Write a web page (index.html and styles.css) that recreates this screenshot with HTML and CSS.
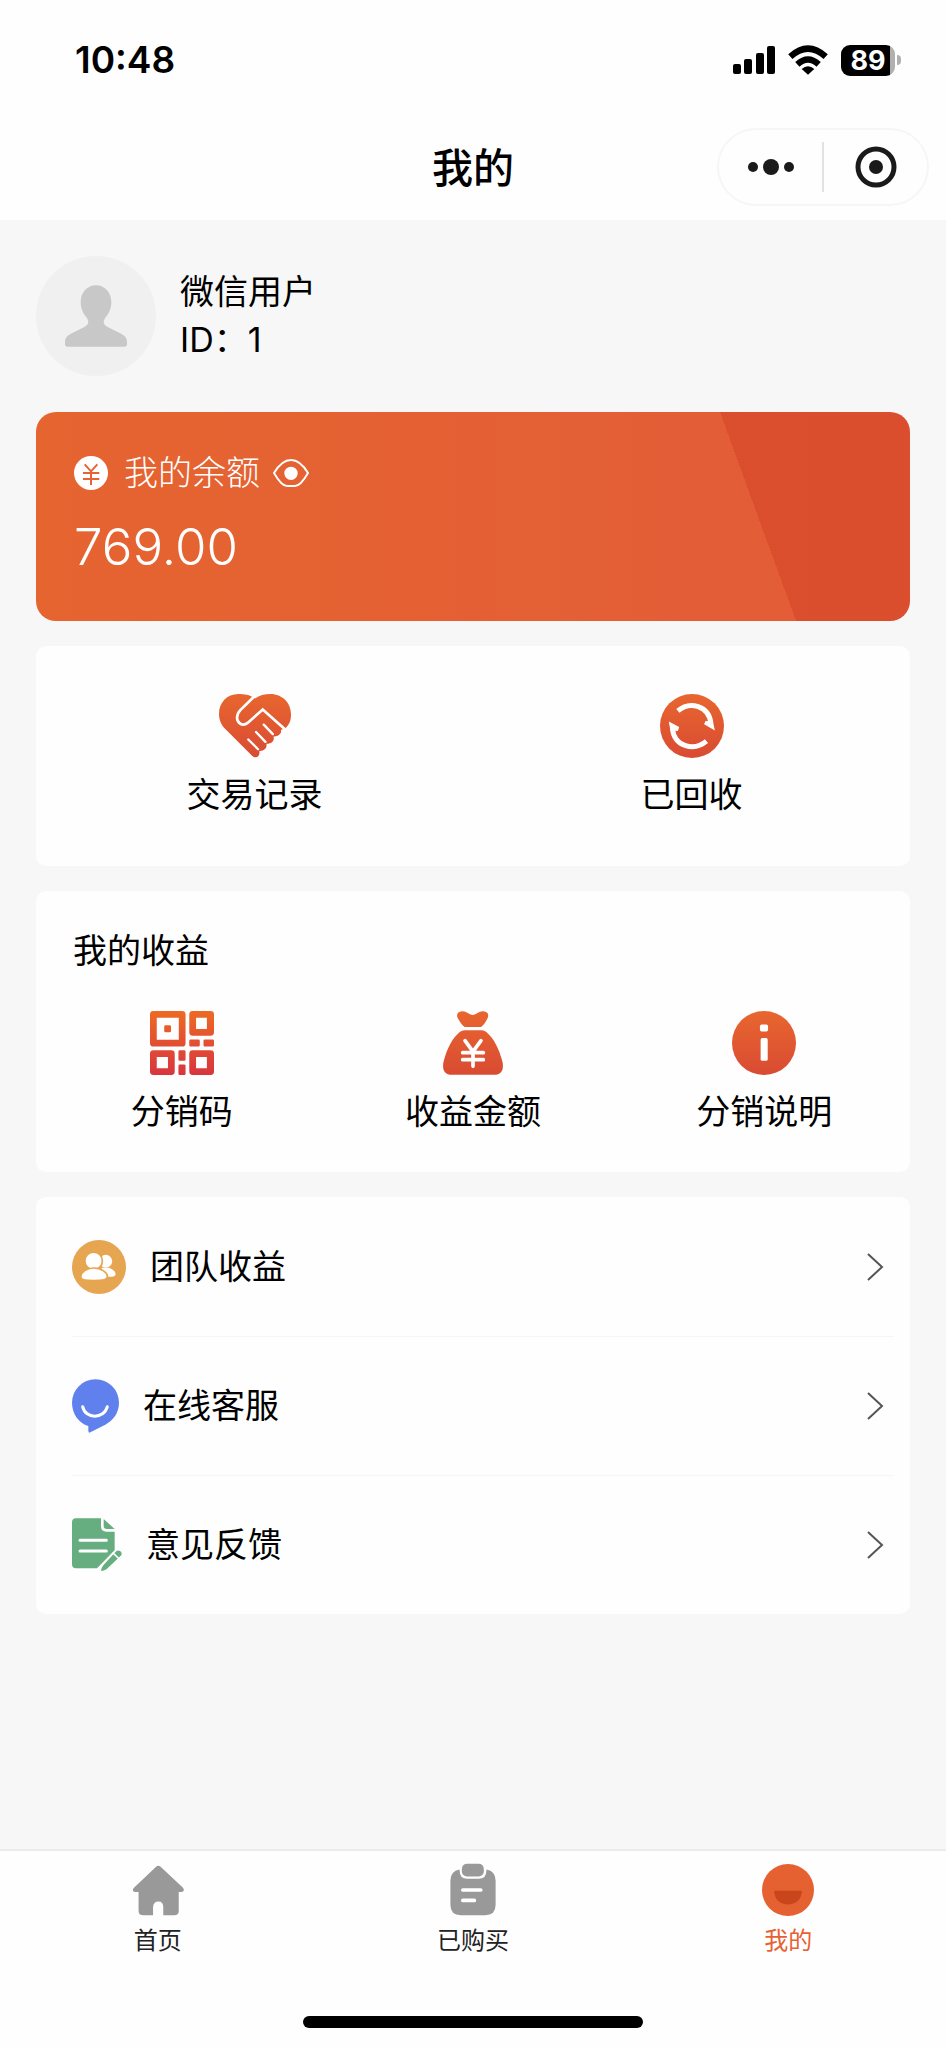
FILE: index.html
```html
<!DOCTYPE html>
<html lang="zh-CN">
<head>
<meta charset="utf-8">
<meta name="viewport" content="width=device-width, initial-scale=1">
<title>我的</title>
<link rel="stylesheet" href="styles.css">
</head>
<body>
<svg class="defs" width="0" height="0" aria-hidden="true">
  <defs>
    <linearGradient id="warm" x1="0" y1="0" x2="0" y2="1"><stop offset="0" stop-color="#e8662f"/><stop offset="1" stop-color="#d94b33"/></linearGradient>
    <linearGradient id="qr" gradientUnits="userSpaceOnUse" x1="0" y1="0" x2="0" y2="189"><stop offset="0" stop-color="#ed6a24"/><stop offset="1" stop-color="#d8353f"/></linearGradient>
  </defs>
</svg>
<header class="top">
  <div class="status">
    <span class="time">10:48</span>
    <div class="signals">
      <svg width="42" height="28" viewBox="0 0 42 28" aria-hidden="true"><rect x="0" y="18" width="8" height="10" rx="2"/><rect x="11" y="13" width="8" height="15" rx="2"/><rect x="23" y="7" width="8" height="21" rx="2"/><rect x="34" y="0" width="8" height="28" rx="2"/></svg>
      <svg width="40" height="30" viewBox="0 0 120 88" aria-hidden="true"><g fill="none" stroke="#000" stroke-width="19"><path d="M7 34Q60-14 113 34"/><path d="M28 57Q60 28 92 57"/></g><path d="M41 71Q60 55 79 71L60 88Z"/></svg>
      <div class="battery"><span class="level">89</span><span class="tip"></span></div>
    </div>
  </div>
  <div class="nav">
    <h1 class="title">我的</h1>
    <div class="capsule">
      <button class="cap-btn" type="button" aria-label="更多"><svg width="46" height="18" viewBox="0 0 46 18"><circle cx="5" cy="9" r="5"/><circle cx="23" cy="9" r="8"/><circle cx="41" cy="9" r="5"/></svg></button>
      <button class="cap-btn" type="button" aria-label="关闭"><svg width="42" height="42" viewBox="0 0 42 42"><circle cx="21" cy="21" r="18" fill="none" stroke="#1a1a1a" stroke-width="5"/><circle cx="21" cy="21" r="7"/></svg></button>
    </div>
  </div>
</header>
<main class="page">
  <section class="user">
    <div class="avatar"><svg width="62" height="62" viewBox="0 0 186 184" aria-hidden="true"><path fill="#c8c8c8" d="M93 0C119 0 139 21 139 50C139 70 131 85 122 96C113 108 114 118 128 125L170 146C182 153 186 160 186 171V176Q186 184 178 184H8Q0 184 0 176V171C0 160 4 153 16 146L58 125C72 118 73 108 64 96C55 85 47 70 47 50C47 21 67 0 93 0Z"/></svg></div>
    <div class="who"><p>微信用户</p><p>ID：1</p></div>
  </section>
  <section class="balance">
    <div class="balance-head">
      <svg width="34" height="34" viewBox="0 0 102 102" aria-hidden="true"><circle cx="51" cy="51" r="51" fill="#fff"/><path fill="none" stroke="#e56335" stroke-width="6" d="M32 25L51 46L70 25M51 46V87M27 51H76M27 69H76"/></svg>
      <h2 class="balance-label">我的余额</h2>
      <button class="eye" type="button" aria-label="显示或隐藏余额"><svg width="36" height="28" viewBox="0 0 108 84"><path fill="none" stroke="#fff" stroke-width="6" stroke-linejoin="round" d="M3 42C18 17 35 3 54 3S90 17 105 42C90 68 78 81 66 81H42C30 81 18 68 3 42Z"/><circle cx="54" cy="43" r="20" fill="#fff"/></svg></button>
    </div>
    <p class="amount">769.00</p>
  </section>
  <nav class="card records">
    <a class="tile" href="#records"><svg width="72" height="64" viewBox="177 71 214 190" aria-hidden="true"><path fill="url(#warm)" d="M284 84C268 73 252 71 235 71C200 71 177 97 177 130C177 150 186 165 195 174L273 252C283 264 300 260 297 240C310 241 321 233 318 219C333 220 343 210 339 197C352 199 365 188 361 178L375 172C386 162 391 150 391 132C391 97 365 71 330 71C312 71 297 75 284 84Z"/><g fill="none" stroke="#fff" stroke-width="8" stroke-linecap="round"><path d="M284 76L241 118C226 134 229 151 239 158C247 164 257 161 263 156L307 117L378 180"/><path stroke-width="7" d="M264 206L293 235M287 184L315 213M310 162L337 190"/></g></svg>交易记录</a>
    <a class="tile" href="#recycled"><svg width="64" height="64" viewBox="0 0 190 190" aria-hidden="true"><circle cx="95" cy="95" r="95" fill="url(#warm)"/><g fill="none" stroke="#fff" stroke-width="15"><path d="M53 50C88 20 146 34 151 88"/><path d="M138 140C102 170 42 158 37 102"/></g><path fill="#fff" d="M131 90L135 80L157 82L163 108Z M57 98L53 110L31 108L26 82Z"/></svg>已回收</a>
  </nav>
  <section class="card income">
    <h2 class="card-title">我的收益</h2>
    <div class="tiles">
      <a class="tile" href="#code"><svg width="64" height="64" viewBox="0 0 189 189" aria-hidden="true"><path fill="url(#qr)" fill-rule="evenodd" d="M10 0H95Q105 0 105 10V95Q105 105 95 105H10Q0 105 0 95V10Q0 0 10 0ZM20 20V85H85V20ZM46 42H58Q62 42 62 46V59Q62 63 58 63H46Q42 63 42 59V46Q42 42 46 42ZM126 0H179Q189 0 189 10V63Q189 73 179 73H126Q116 73 116 63V10Q116 0 126 0ZM136 20V53H168V20ZM10 116H63Q73 116 73 126V179Q73 189 63 189H10Q0 189 0 179V126Q0 116 10 116ZM20 136V169H53V136ZM126 116H179Q189 116 189 126V179Q189 189 179 189H126Q116 189 116 179V126Q116 116 126 116ZM136 136V169H168V136ZM120 84H143Q147 84 147 88V101Q147 105 143 105H120Q116 105 116 101V88Q116 84 120 84ZM162 84H185Q189 84 189 88V101Q189 105 185 105H162Q158 105 158 101V88Q158 84 162 84ZM88 116H101Q105 116 105 120V143Q105 147 101 147H88Q84 147 84 143V120Q84 116 88 116ZM88 158H101Q105 158 105 162V185Q105 189 101 189H88Q84 189 84 185V162Q84 158 88 158Z"/></svg>分销码</a>
      <a class="tile" href="#income"><svg width="60" height="64" viewBox="0 0 180 190" aria-hidden="true"><path fill="url(#warm)" d="M57 0C71-1 78 11 89 11S107-1 121 0C133 1 139 9 134 20C128 32 123 41 114 47H65C56 41 51 32 44 20C39 9 45 1 57 0ZM65 57H116Q124 57 130 62C153 82 168 112 178 150C184 174 175 190 154 190H26C5 190-4 174 2 150C12 112 27 82 50 62Q57 57 65 57Z"/><path fill="none" stroke="#fff" stroke-width="11" stroke-linecap="round" d="M66 88L90 121L114 88M90 121V165M59 124H121M59 145H121"/></svg>收益金额</a>
      <a class="tile" href="#guide"><svg width="64" height="64" viewBox="0 0 190 190" aria-hidden="true"><circle cx="95" cy="95" r="95" fill="url(#warm)"/><rect x="83" y="40" width="24" height="21" rx="5" fill="#fff"/><rect x="85" y="80" width="21" height="68" rx="5" fill="#fff"/></svg>分销说明</a>
    </div>
  </section>
  <nav class="card menu">
    <a class="row" href="#team"><svg width="54" height="54" viewBox="0 0 160 160" aria-hidden="true"><circle cx="80" cy="80" r="80" fill="#e6a550"/><g fill="#fff"><circle cx="100" cy="63" r="19"/><path d="M88 82H108C122 86 129 94 129 101Q129 109 117 109H92Z"/></g><g fill="#fff" stroke="#e6a550" stroke-width="5"><circle cx="64" cy="62" r="26"/><path d="M64 83C88 83 105 97 105 108C105 119 92 120 64 120S26 119 26 108C26 97 42 83 64 83Z"/></g></svg><span class="row-text">团队收益</span><svg class="chevron" width="18" height="30" viewBox="0 0 18 30" aria-hidden="true"><path d="M2 2L16 15L2 28"/></svg></a>
    <a class="row" href="#service"><svg width="47" height="54" viewBox="0 0 141 160" aria-hidden="true"><path fill="#6080ee" d="M70 0A70 70 0 0 1 141 70C141 99 125 122 100 136L52 160C50 160 49 156 49 152V140C20 131 0 103 0 70A70 70 0 0 1 70 0Z"/><path fill="none" stroke="#fff" stroke-width="9" stroke-linecap="round" d="M32 82C40 120 96 120 106 82"/></svg><span class="row-text">在线客服</span><svg class="chevron" width="18" height="30" viewBox="0 0 18 30" aria-hidden="true"><path d="M2 2L16 15L2 28"/></svg></a>
    <a class="row" href="#feedback"><svg width="50" height="54" viewBox="0 0 150 160" aria-hidden="true"><path fill="#66ad80" d="M12 0H87V24Q87 40 103 40H128V96L75 150H12Q0 150 0 138V12Q0 0 12 0Z"/><path fill="#66ad80" d="M95 2L128 32H105Q95 32 95 23Z"/><path fill="none" stroke="#fff" stroke-width="9" stroke-linecap="round" d="M24 66H103M24 98H103"/><path fill="#66ad80" stroke="#fff" stroke-width="5" d="M130 98Q138 90 147 97Q156 106 148 114L106 154Q98 161 84 161Q84 148 92 139Z"/><path stroke="#fff" stroke-width="5" d="M122 103L142 122"/></svg><span class="row-text">意见反馈</span><svg class="chevron" width="18" height="30" viewBox="0 0 18 30" aria-hidden="true"><path d="M2 2L16 15L2 28"/></svg></a>
  </nav>
</main>
<footer class="bottom">
  <nav class="tabs">
    <a class="tab" href="#home"><svg width="54" height="54" viewBox="-6 -8 164 164" aria-hidden="true"><path fill="#999" d="M71 3Q77-3 83 3L152 67Q157 73 153 78Q151 80 146 80H139V137Q139 151 125 151H92V126Q92 109 77 109T61 126V151H32Q17 151 17 137V80H8Q2 80 0 76Q-2 71 3 67Z"/></svg>首页</a>
    <a class="tab" href="#bought"><svg width="54" height="54" viewBox="-13 -2 160 160" aria-hidden="true"><rect x="34" y="0" width="65" height="38" rx="15" fill="#999"/><path fill="#999" d="M27 17Q27 45 50 45H84Q107 45 107 17Q134 22 134 50V122Q134 153 103 153H31Q0 153 0 122V50Q0 22 27 17Z"/><path stroke="#fff" stroke-width="11" stroke-linecap="round" d="M37 78H90M37 109H71"/></svg>已购买</a>
    <a class="tab active" href="#me" aria-current="page"><svg width="54" height="54" viewBox="0 0 164 164" aria-hidden="true"><circle cx="82" cy="82" r="79" fill="#e66132"/><path fill="#c9451c" d="M40 84H124C124 110 105 126 82 126S40 110 40 84Z"/></svg>我的</a>
  </nav>
  <div class="home-bar"></div>
</footer>
</body>
</html>
```
FILE: styles.css
```css
* { box-sizing: border-box; margin: 0; padding: 0; }
body {
  min-height: 100vh;
  display: flex;
  flex-direction: column;
  background: #f7f7f7;
  color: #000;
  font: 34px/48px Inter, "Noto Sans CJK SC", sans-serif;
  font-weight: 400;
}
svg { display: block; flex: none; }
button { border: 0; background: none; font: inherit; color: inherit; }
a { color: inherit; text-decoration: none; }
.defs { position: absolute; }

.top { background: #fefefe; padding-bottom: 14px; }
.status {
  display: flex;
  justify-content: space-between;
  align-items: center;
  padding: 36px 45px 0 75px;
}
.time { font-size: 37px; font-weight: 600; }
.signals { display: flex; align-items: center; gap: 13px; }
.battery { display: flex; align-items: center; gap: 2px; }
.level {
  width: 54px;
  border-radius: 9px;
  background: linear-gradient(90deg, #000 49px, #b0b0b0 49px);
  color: #fff;
  font-size: 27px;
  line-height: 31px;
  font-weight: 700;
  text-align: center;
}
.tip { width: 4px; height: 10px; border-radius: 0 5px 5px 0; background: #b0b0b0; }
.nav {
  display: grid;
  grid-template-columns: 1fr auto 1fr;
  align-items: center;
  padding: 44px 17px 0;
}
.title { grid-column: 2; padding-top: 2px; font-size: 41px; font-weight: 500; }
.capsule {
  justify-self: end;
  display: flex;
  align-items: center;
  width: 212px;
  height: 78px;
  border: 2px solid #f6f6f6;
  border-radius: 39px;
}
.cap-btn { flex: 1; height: 50px; display: flex; align-items: center; justify-content: center; fill: #1a1a1a; }
.cap-btn + .cap-btn { border-left: 2px solid #e2e2e2; }

.page { padding: 36px; display: flex; flex-direction: column; gap: 25px; }
.user { display: flex; align-items: center; gap: 24px; margin-bottom: 11px; }
.avatar {
  width: 120px;
  height: 120px;
  border-radius: 50%;
  background: #f0f0f0;
  display: flex;
  align-items: center;
  justify-content: center;
}
.balance {
  height: 209px;
  padding: 37px 38px;
  border-radius: 20px;
  color: #fff;
  background:
    linear-gradient(70deg, transparent 80%, rgba(212, 66, 38, 0.55) 80%),
    linear-gradient(90deg, #e66430, #e25c38);
}
.balance-head { display: flex; align-items: center; gap: 16px; }
.balance-label { font-size: 34px; font-weight: 300; }
.eye { margin-left: -3px; }
.amount { margin-top: 20px; font-size: 51px; line-height: 60px; font-weight: 300; }
.card { background: #fefefe; border-radius: 10px; }
.records { display: grid; grid-template-columns: 1fr 1fr; padding: 48px 0 47px; }
.tile { display: flex; flex-direction: column; align-items: center; gap: 13px; }
.income { padding: 36px 0; }
.card-title { padding-left: 37px; font-size: 34px; font-weight: 400; }
.tiles { display: grid; grid-template-columns: 1fr 1fr 1fr; margin-top: 36px; }
.menu { padding: 0 16px 0 36px; }
.row { display: flex; align-items: center; gap: 24px; height: 139px; }
.row + .row { border-top: 1px solid #f6f6f6; }
.row-text { flex: 1; }
.chevron { margin-right: 10px; fill: none; stroke: #555; stroke-width: 2; }

.bottom { margin-top: auto; background: #fefefe; border-top: 2px solid #ebebeb; padding-bottom: 20px; }
.tabs { display: grid; grid-template-columns: 1fr 1fr 1fr; padding-top: 12px; }
.tab {
  display: flex;
  flex-direction: column;
  align-items: center;
  gap: 6px;
  color: #222;
  font-size: 24px;
  line-height: 36px;
}
.active { color: #e66132; }
.home-bar { width: 36%; height: 12px; margin: 57px auto 0; border-radius: 6px; background: #000; }
```
